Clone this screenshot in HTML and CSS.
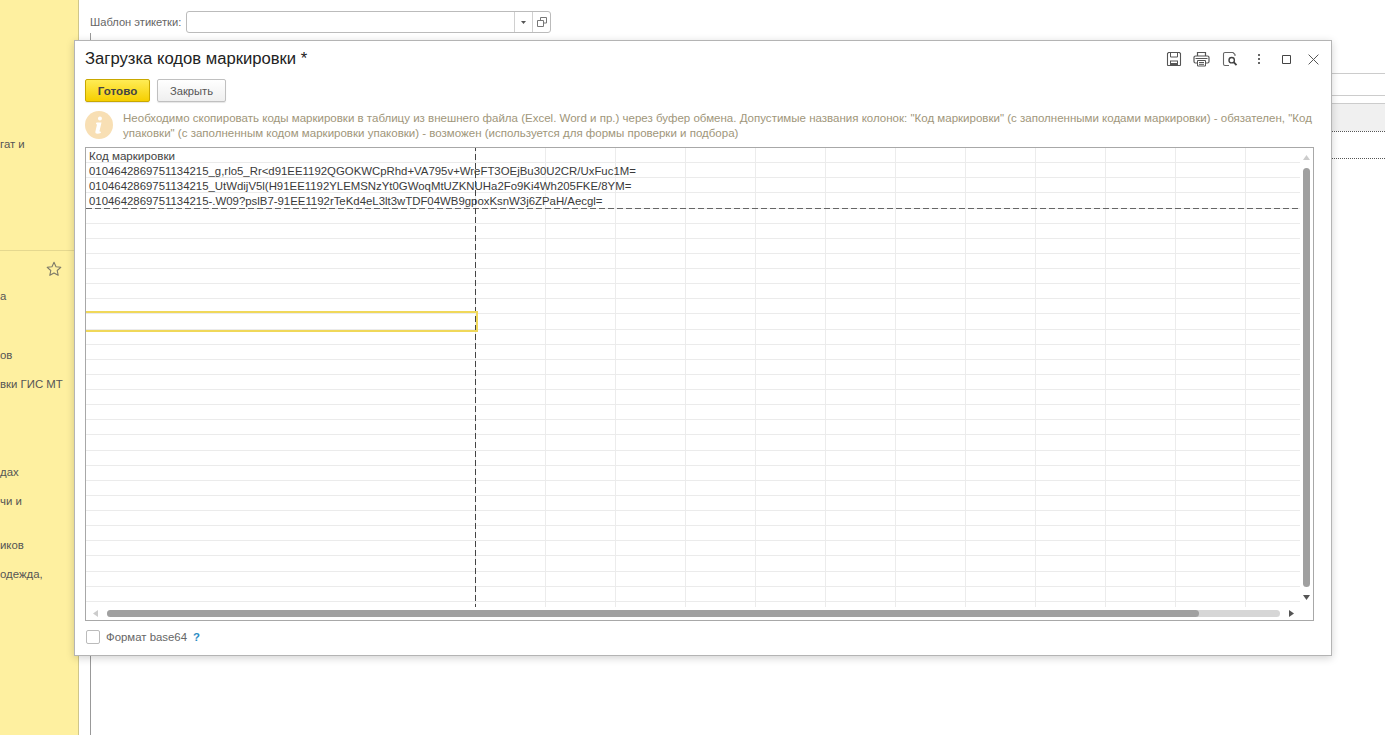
FILE: index.html
```html
<!DOCTYPE html>
<html lang="ru">
<head>
<meta charset="utf-8">
<title>Загрузка кодов маркировки</title>
<link rel="stylesheet" href="styles.css">
</head>
<body>
<div class="app">
  <aside class="side">
    <div class="side-top"><div class="side-item s1">гат и</div></div>
    <div class="side-bottom">
      <div class="star-row"><svg width="16" height="16" viewBox="0 0 16 16"><path d="M8 1.3l2 4.500 4.800.5-3.600 3.200 1 4.800L8 11.900l-4.200 2.400 1-4.800L1.200 6.300 6 5.800z" fill="none" stroke="#7d7a68" stroke-width="1.100" stroke-linejoin="round"/></svg></div>
      <div class="side-item s2">а</div>
      <div class="side-item s3">ов</div>
      <div class="side-item s4">вки ГИС МТ</div>
      <div class="side-item s5">дах</div>
      <div class="side-item s6">чи и</div>
      <div class="side-item s7">иков</div>
      <div class="side-item s8">одежда,</div>
    </div>
  </aside>
  <main class="main">
    <div class="tpl-row">
      <span class="tpl-label">Шаблон этикетки:</span>
      <div class="tpl-field">
        <div class="tpl-input"></div>
        <div class="tpl-btn"><svg width="7" height="5" viewBox="0 0 7 5"><path d="M1 1h5L3.500 4z" fill="#555"/></svg></div>
        <div class="tpl-btn"><svg width="10" height="10" viewBox="0 0 10 10"><path d="M3.500 3V.5h6v5.500H7M.5 3.500h6v6h-6z" fill="none" stroke="#777"/></svg></div>
      </div>
    </div>
    <div class="back">
      <div class="back-line b1"></div>
      <div class="back-line b2"></div>
      <div class="back-head"></div>
      <div class="back-dot b3"></div>
      <div class="back-dot b4"></div>
    </div>
  </main>
</div>

<section class="modal">
  <header class="m-head">
    <h1 class="m-title">Загрузка кодов маркировки *</h1>
    <div class="m-tools">
      <svg class="tool t-save" width="16" height="16" viewBox="0 0 16 16"><path d="M2.500 1.500h11l1 1v11.500a.5.5 0 0 1-.5.5H2a.5.500 0 0 1-.5-.5V2.500z" fill="none" stroke="#555" stroke-width="1.100"/><path d="M4.500 2v4h7V2" fill="none" stroke="#555"/><path d="M4 14.500v-5h8v5z" fill="#555"/><path d="M5 10.500h6v1.500H5z" fill="#fff"/></svg>
      <svg class="tool t-print" width="17" height="16" viewBox="0 0 17 16"><path d="M4.500 5V1.500h8V5M4.500 12h-2a1.500 1.500 0 0 1-1.500-1.500V6.500A1.500 1.500 0 0 1 2.500 5h12A1.500 1.500 0 0 1 16 6.500v4a1.500 1.500 0 0 1-1.500 1.500h-2" fill="none" stroke="#555" stroke-width="1.200"/><path d="M4.500 9.500h8v5.500h-8zM6 11.500h5M6 13.300h5" fill="none" stroke="#555"/><path d="M2.500 7.500h12" stroke="#555"/></svg>
      <svg class="tool t-prev" width="16" height="16" viewBox="0 0 16 16"><path d="M9.500 1.500H3a1.500 1.500 0 0 0-1.500 1.500v10A1.500 1.500 0 0 0 3 14.500h4M9.500 1.500h1.500l2 2v1.500" fill="none" stroke="#666" stroke-width="1.100"/><circle cx="9.700" cy="9.200" r="2.700" fill="none" stroke="#444" stroke-width="1.400"/><path d="M11.700 11.200l2.800 3" stroke="#444" stroke-width="1.800"/></svg>
      <svg class="tool t-more" width="4" height="12" viewBox="0 0 4 12"><path d="M1 1h2v2H1zM1 5h2v2H1zM1 9h2v2H1z" fill="#666"/></svg>
      <svg class="tool t-max" width="9" height="9" viewBox="0 0 9 9"><path d="M.5.500h8v8h-8z" fill="none" stroke="#444"/></svg>
      <svg class="tool t-close" width="11" height="11" viewBox="0 0 11 11"><path d="M.6.600l9.800 9.800M10.400.6L.6 10.400" stroke="#555" stroke-width="1"/></svg>
    </div>
  </header>

  <div class="m-actions">
    <button class="btn btn-primary" type="button">Готово</button>
    <button class="btn" type="button">Закрыть</button>
  </div>

  <div class="m-note">
    <svg class="note-icon" width="28" height="28" viewBox="0 0 28 28"><circle cx="14" cy="14" r="14" fill="#f8dfb4"/><path d="M15 5.500a2 2 0 1 1-.1 4 2 2 0 0 1 .1-4zM11.500 11.500h5l-2 8.500q-.2 1 1.500.8l-.3 1.200q-1.500.8-3.300.8-2.400 0-2-2.200l1.500-6.600q.2-1-1-1z" fill="#fff"/></svg>
    <p class="note-text">Необходимо скопировать коды маркировки в таблицу из внешнего файла (Excel. Word и пр.) через буфер обмена. Допустимые названия колонок: "Код маркировки" (с заполненными кодами маркировки) - обязателен, "Код<br>упаковки" (с заполненным кодом маркировки упаковки) - возможен (используется для формы проверки и подбора)</p>
  </div>

  <div class="sheet">
    <div class="grid">
      <div class="row">Код маркировки</div>
      <div class="row">010464286975113421​5_g,rlo5_Rr&lt;d91EE1192QGOKWCpRhd+VA795v+WreFT3OEjBu30U2CR/UxFuc1M=</div>
      <div class="row">010464286975113421​5_UtWdijV5l(H91EE1192YLEMSNzYt0GWoqMtUZKNUHa2Fo9Ki4Wh205FKE/8YM=</div>
      <div class="row">010464286975113421​5-.W09?pslB7-91EE1192rTeKd4eL3lt3wTDF04WB9gpoxKsnW3j6ZPaH/Aecgl=</div>
      <div class="row"></div><div class="row"></div><div class="row"></div><div class="row"></div>
      <div class="row"></div><div class="row"></div><div class="row"></div><div class="row"></div>
      <div class="row"></div><div class="row"></div><div class="row"></div><div class="row"></div>
      <div class="row"></div><div class="row"></div><div class="row"></div><div class="row"></div>
      <div class="row"></div><div class="row"></div><div class="row"></div><div class="row"></div>
      <div class="row"></div><div class="row"></div><div class="row"></div><div class="row"></div>
      <div class="row"></div><div class="row"></div>
      <div class="dash-h"></div>
      <div class="dash-v"></div>
      <div class="sel-cell"></div>
    </div>
    <div class="vbar">
      <svg class="arrow" width="7" height="5" viewBox="0 0 7 5"><path d="M3.500 0l3.500 5H0z" fill="#ccc"/></svg>
      <div class="vthumb"></div>
      <svg class="arrow" width="7" height="5" viewBox="0 0 7 5"><path d="M0 0h7L3.500 5z" fill="#555"/></svg>
    </div>
    <div class="hbar">
      <svg class="arrow" width="5" height="7" viewBox="0 0 5 7"><path d="M5 0v7L0 3.500z" fill="#ccc"/></svg>
      <div class="htrack"><div class="hthumb"></div></div>
      <svg class="arrow" width="5" height="7" viewBox="0 0 5 7"><path d="M0 0l5 3.500L0 7z" fill="#555"/></svg>
    </div>
  </div>

  <footer class="m-foot">
    <span class="check"></span>
    <span class="check-label">Формат base64</span>
    <span class="help">?</span>
  </footer>
</section>
</body>
</html>
```
FILE: styles.css
```css
* { box-sizing: border-box; }
html, body { margin: 0; padding: 0; height: 100%; overflow: hidden; background: #fff; }
body { font: 11.4px/15px "Liberation Sans", Arial, sans-serif; color: #333; }

.app { display: flex; height: 735px; }

.side { width: 79px; flex: none; background: #fef0a0; border-right: 1px solid #cfc68a; color: #555; overflow: hidden; white-space: nowrap; }
.side-top { height: 251px; border-bottom: 1px solid #e5d88f; padding-top: 137px; }
.side-bottom { padding-top: 10px; }
.star-row { display: flex; justify-content: flex-end; padding-right: 16px; height: 16px; }
.s2 { margin-top: 12px; }
.s3 { margin-top: 44px; }
.s4 { margin-top: 14px; }
.s5 { margin-top: 73px; }
.s6 { margin-top: 14px; }
.s7 { margin-top: 29px; }
.s8 { margin-top: 14px; }

.main { flex: 1; min-width: 0; display: flex; flex-direction: column; padding: 11px 0 0 11px; }
.tpl-row { display: flex; align-items: center; gap: 5px; height: 22px; flex: none; }
.tpl-label { color: #666; font-size: 11.15px; }
.tpl-field { display: flex; width: 365px; height: 22px; border: 1px solid #bbb; border-radius: 3px; background: #fff; }
.tpl-input { flex: 1; }
.tpl-btn { width: 18px; display: flex; align-items: center; justify-content: center; border-left: 1px solid #d0d0d0; }
.tpl-btn svg { display: block; }

.back { flex: 1; border-left: 1px solid #999; display: flex; flex-direction: column; padding-top: 40px; }
.back-line { border-top: 1px solid #ccc; }
.b1 { height: 22px; }
.b2 { height: 8px; }
.back-head { height: 28px; background: #f0f0f0; border-top: 1px solid #ccc; }
.back-dot { border-top: 1px dotted #555; }
.b3 { height: 27px; }

.modal { position: absolute; left: 74px; top: 40px; width: 1258px; height: 616px; background: #fff; border: 1px solid #b4b4b4; box-shadow: 0 2px 8px rgba(0,0,0,.18); padding: 0 17px 0 10px; display: flex; flex-direction: column; }
.m-head { display: flex; align-items: center; justify-content: space-between; height: 38px; flex: none; }
.m-title { margin: 0; font-size: 16.65px; font-weight: 400; line-height: 20px; color: #222; position: relative; top: -1px; }
.m-tools { display: flex; align-items: center; margin-right: -5px; padding-bottom: 2px; }
.tool { display: block; }
.t-save { margin-right: 11px; }
.t-print { margin-right: 12px; }
.t-prev { margin-right: 19px; }
.t-more { margin-right: 21px; }
.t-max { margin-right: 17px; }

.m-actions { display: flex; gap: 7px; height: 23px; flex: none; }
.btn { height: 23px; width: 69px; padding: 0; border: 1px solid #c0c0c0; border-radius: 2px; background: linear-gradient(#fff, #efefef); color: #555; font: 11.2px "Liberation Sans", Arial, sans-serif; box-shadow: 0 1px 1px rgba(0,0,0,.1); }
.btn-primary { width: 65px; border-color: #c9a800; background: linear-gradient(#ffec55, #f6cf00); color: #444; font-weight: 700; font-size: 11.6px; }

.m-note { display: flex; gap: 10px; margin-top: 9px; height: 28px; flex: none; }
.note-icon { flex: none; display: block; }
.note-text { margin: 0; color: #a0967a; white-space: nowrap; font-size: 11.53px; line-height: 15px; }

.sheet { position: relative; margin-top: 8px; height: 474px; flex: none; border: 1px solid #a8a8a8; display: grid; grid-template-columns: 1fr 13px; grid-template-rows: 459px 1fr; }
.grid { position: relative; overflow: hidden; background-image: linear-gradient(90deg, #fff 389px, transparent 389px), linear-gradient(90deg, #ececec 1px, transparent 1px); background-size: 100% 100%, 70px 100%; background-position: 0 0, 39px 0; background-repeat: no-repeat, repeat-x; }
.row { height: 15.125px; padding: 1px 0 0 3px; border-bottom: 1px solid #ebebeb; white-space: nowrap; line-height: 14px; color: #3a3a3a; }
.row:nth-child(1) { color: #444; font-size: 11.6px; }

.dash-h { position: absolute; left: 0; right: 0; top: 60px; height: 1px; background: repeating-linear-gradient(90deg, #666 0 6px, transparent 6px 9px); }
.dash-v { position: absolute; top: 0; bottom: 0; left: 389px; width: 1px; background: repeating-linear-gradient(#444 0 6px, transparent 6px 9px) 0 -3px; }
.sel-cell { position: absolute; left: 0; top: 163px; width: 392px; height: 21px; border: 2px solid #f0d85a; border-left: 0; }

.vbar { display: flex; flex-direction: column; align-items: center; justify-content: space-between; padding: 7px 1px 7px 0; }
.vthumb { width: 7px; height: 419px; border-radius: 4px; background: #a0a0a0; }
.hbar { grid-column: 1 / 3; display: flex; align-items: center; padding: 0 19px 0 7px; gap: 9px; }
.htrack { flex: 1; height: 7px; border-radius: 4px; background: #d6d6d6; }
.hthumb { width: 1092px; height: 7px; border-radius: 4px; background: #a0a0a0; }
.arrow { display: block; flex: none; }

.m-foot { display: flex; align-items: center; height: 30px; flex: none; padding: 2px 0 0 1px; }
.check { width: 14px; height: 14px; border: 1px solid #bbb; border-radius: 2px; background: #fff; }
.check-label { margin-left: 6px; color: #666; }
.help { margin-left: 6px; color: #2b8cc4; font-weight: 700; }
```
